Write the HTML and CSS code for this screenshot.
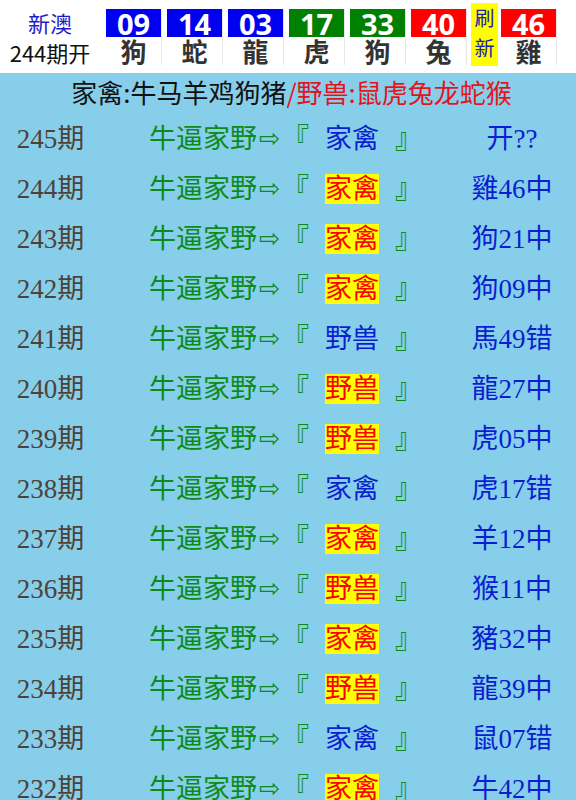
FILE: index.html
```html
<!DOCTYPE html>
<html lang="zh-CN">
<head>
  <meta charset="UTF-8">
  <meta name="viewport" content="width=device-width, initial-scale=1.0">
  <title>新澳 家禽野兽</title>
  <link rel="stylesheet" href="styles.css">
</head>
<body>

<!-- Latest draw -->
<div class="draw">
  <div class="draw-title">
    <span class="draw-name">新澳</span>
    <span class="draw-issue">244期开</span>
  </div>
  <div class="ball"><span class="num blue">09</span><span class="zodiac">狗</span></div>
  <div class="ball"><span class="num blue">14</span><span class="zodiac">蛇</span></div>
  <div class="ball"><span class="num blue">03</span><span class="zodiac">龍</span></div>
  <div class="ball"><span class="num green">17</span><span class="zodiac">虎</span></div>
  <div class="ball"><span class="num green">33</span><span class="zodiac">狗</span></div>
  <div class="ball"><span class="num red">40</span><span class="zodiac">兔</span></div>
  <div class="refresh">刷<br>新</div>
  <div class="ball"><span class="num red">46</span><span class="zodiac">雞</span></div>
</div>

<div class="board">
  <div class="legend">家禽:牛马羊鸡狗猪<span class="wild">/野兽:鼠虎兔龙蛇猴</span></div>

  <div class="row"><span class="issue">245期</span><span class="pick">牛逼家野<span class="arrow">⇨</span>『<span class="tag">家禽</span>』</span><span class="result">开??</span></div>
  <div class="row"><span class="issue">244期</span><span class="pick">牛逼家野<span class="arrow">⇨</span>『<span class="tag hit">家禽</span>』</span><span class="result">雞46中</span></div>
  <div class="row"><span class="issue">243期</span><span class="pick">牛逼家野<span class="arrow">⇨</span>『<span class="tag hit">家禽</span>』</span><span class="result">狗21中</span></div>
  <div class="row"><span class="issue">242期</span><span class="pick">牛逼家野<span class="arrow">⇨</span>『<span class="tag hit">家禽</span>』</span><span class="result">狗09中</span></div>
  <div class="row"><span class="issue">241期</span><span class="pick">牛逼家野<span class="arrow">⇨</span>『<span class="tag">野兽</span>』</span><span class="result">馬49错</span></div>
  <div class="row"><span class="issue">240期</span><span class="pick">牛逼家野<span class="arrow">⇨</span>『<span class="tag hit">野兽</span>』</span><span class="result">龍27中</span></div>
  <div class="row"><span class="issue">239期</span><span class="pick">牛逼家野<span class="arrow">⇨</span>『<span class="tag hit">野兽</span>』</span><span class="result">虎05中</span></div>
  <div class="row"><span class="issue">238期</span><span class="pick">牛逼家野<span class="arrow">⇨</span>『<span class="tag">家禽</span>』</span><span class="result">虎17错</span></div>
  <div class="row"><span class="issue">237期</span><span class="pick">牛逼家野<span class="arrow">⇨</span>『<span class="tag hit">家禽</span>』</span><span class="result">羊12中</span></div>
  <div class="row"><span class="issue">236期</span><span class="pick">牛逼家野<span class="arrow">⇨</span>『<span class="tag hit">野兽</span>』</span><span class="result">猴11中</span></div>
  <div class="row"><span class="issue">235期</span><span class="pick">牛逼家野<span class="arrow">⇨</span>『<span class="tag hit">家禽</span>』</span><span class="result">豬32中</span></div>
  <div class="row"><span class="issue">234期</span><span class="pick">牛逼家野<span class="arrow">⇨</span>『<span class="tag hit">野兽</span>』</span><span class="result">龍39中</span></div>
  <div class="row"><span class="issue">233期</span><span class="pick">牛逼家野<span class="arrow">⇨</span>『<span class="tag">家禽</span>』</span><span class="result">鼠07错</span></div>
  <div class="row"><span class="issue">232期</span><span class="pick">牛逼家野<span class="arrow">⇨</span>『<span class="tag hit">家禽</span>』</span><span class="result">牛42中</span></div>
</div>

</body>
</html>
```

FILE: styles.css
```css
body {
  margin: 0;
  background-color: #fff;
  font-family: "Noto Sans CJK SC", "Noto Sans", sans-serif;
}
/* Draw header */
.draw {
  display: flex;
  height: 73px;
  background-color: #fff;
}
.draw-title {
  width: 100px;
  margin-right: 3px;
  display: flex;
  flex-direction: column;
  align-items: center;
  font-size: 22px;
  line-height: 30px;
  padding-top: 7px;
}
.draw-name {
  color: #1e1ec8;
}
.draw-issue {
  color: #111;
}
.ball {
  width: 55px;
  height: 56px;
  margin: 9px 2px 0 3px;
  display: flex;
  flex-direction: column;
  align-items: center;
  border-right: 1px solid #e6e6e6;
}
.num {
  display: block;
  width: 55px;
  height: 28px;
  line-height: 29px;
  text-align: center;
  color: #fff;
  font-family: "Open Sans", "Noto Sans", sans-serif;
  font-weight: bold;
  font-size: 29px;
}
.blue { background-color: #0000f0; }
.green { background-color: #008000; }
.red { background-color: #f00; }
.zodiac {
  font-size: 26px;
  font-weight: bold;
  color: #333;
  line-height: 28px;
}
.refresh {
  width: 27px;
  height: 63px;
  margin-top: 3px;
  margin-left: 2px;
  background-color: #ff0;
  color: #2020b0;
  font-size: 20px;
  line-height: 30px;
  text-align: center;
}
/* Forecast list */
.board {
  background-color: #87ceeb;
  min-height: 727px;
}
.legend {
  height: 38px;
  line-height: 38px;
  text-align: center;
  font-size: 26px;
  color: #111;
  padding-left: 7px;
}
.legend .wild {
  color: #e3151c;
}
.row {
  display: grid;
  grid-template-columns: 101px 367px 88px;
  height: 50px;
  align-items: center;
  font-family: "Liberation Serif", "Noto Sans CJK SC", serif;
  font-size: 27px;
  white-space: nowrap;
}
.issue {
  text-align: center;
  color: #4e4238;
}
.pick {
  padding-left: 48px;
  color: #0c8a1c;
}
.arrow {
  display: inline-block;
  width: 23px;
  margin-left: 2px;
  font-family: "DejaVu Sans", sans-serif;
  font-size: 25px;
  vertical-align: 1px;
}
.tag {
  margin: 0 16px 0 16px;
  color: #0a1fd0;
}
.tag.hit {
  color: #f00;
  background-color: #ff0;
}
.result {
  text-align: center;
  color: #0a1fd0;
}
```
